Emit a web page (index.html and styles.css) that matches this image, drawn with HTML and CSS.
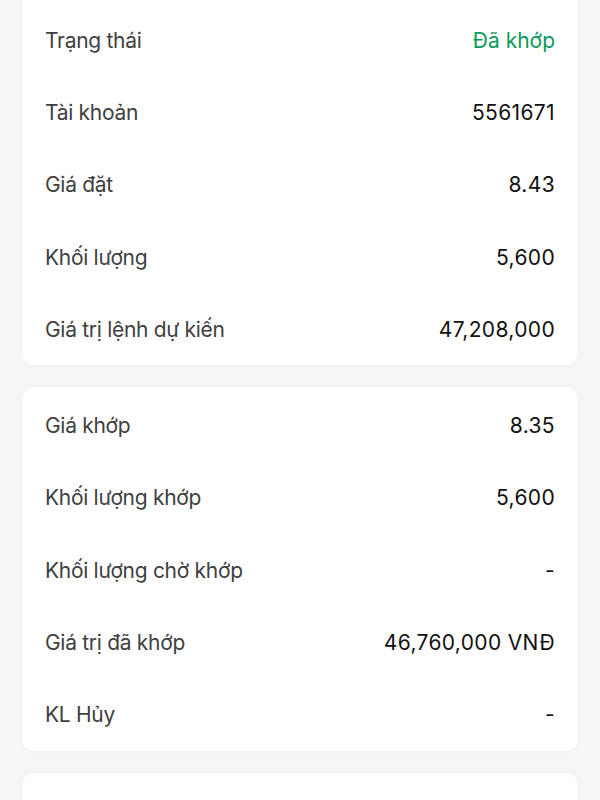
FILE: index.html
```html
<!DOCTYPE html>
<html>
<head>
  <title>Chi tiết lệnh</title>
  <link rel="stylesheet" href="styles.css">
</head>
<body>
  <div class="page">
    <div class="card card-first">
      <div class="row"><span class="label">Trạng thái</span><span class="value green">Đã khớp</span></div>
      <div class="row"><span class="label">Tài khoản</span><span class="value">5561671</span></div>
      <div class="row"><span class="label">Giá đặt</span><span class="value">8.43</span></div>
      <div class="row"><span class="label">Khối lượng</span><span class="value">5,600</span></div>
      <div class="row"><span class="label">Giá trị lệnh dự kiến</span><span class="value">47,208,000</span></div>
    </div>

    <div class="card">
      <div class="row"><span class="label">Giá khớp</span><span class="value">8.35</span></div>
      <div class="row"><span class="label">Khối lượng khớp</span><span class="value">5,600</span></div>
      <div class="row"><span class="label">Khối lượng chờ khớp</span><span class="value">-</span></div>
      <div class="row"><span class="label">Giá trị đã khớp</span><span class="value">46,760,000 VNĐ</span></div>
      <div class="row"><span class="label">KL Hủy</span><span class="value">-</span></div>
    </div>

    <div class="card card-last"></div>
  </div>
</body>
</html>
```

FILE: styles.css
```css
html, body {
  margin: 0;
  padding: 0;
  background: #f6f6f6;
  height: 800px;
  overflow: hidden;
}
body {
  font-family: Inter, "Noto Sans", sans-serif;
  color: #111;
}
.page {
  padding: 0 22px;
  display: flex;
  flex-direction: column;
  gap: 22px;
}
.card {
  background: #fff;
  border-radius: 12px;
  padding: 2px 23px 0;
  box-shadow: 0 0 6px rgba(0, 0, 0, 0.04);
}
.card-first {
  margin-top: -18px;
  padding-top: 22px;
}
.card-last {
  height: 80px;
}
.row {
  display: flex;
  justify-content: space-between;
  align-items: center;
  height: 72.3px;
  font-size: 21px;
}
.label {
  color: #404040;
  letter-spacing: -0.3px;
}
.value {
  color: #111;
  letter-spacing: 0.35px;
}
.green {
  color: #0c9a5a;
  letter-spacing: 0;
}
```
